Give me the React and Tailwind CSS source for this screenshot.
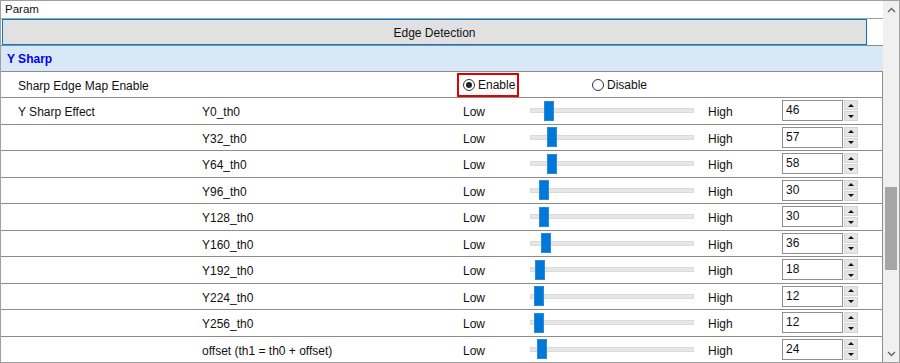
import React from 'react';

const ROWS = [
  { name: 'Y0_th0', value: 46 },
  { name: 'Y32_th0', value: 57 },
  { name: 'Y64_th0', value: 58 },
  { name: 'Y96_th0', value: 30 },
  { name: 'Y128_th0', value: 30 },
  { name: 'Y160_th0', value: 36 },
  { name: 'Y192_th0', value: 18 },
  { name: 'Y224_th0', value: 12 },
  { name: 'Y256_th0', value: 12 },
  { name: 'offset (th1 = th0 + offset)', value: 24 },
];

function Radio({ checked }) {
  return (
    <span className="w-[12px] h-[12px] rounded-full border border-[#333] bg-white flex items-center justify-center flex-shrink-0">
      {checked && <span className="w-[6px] h-[6px] rounded-full bg-[#222]" />}
    </span>
  );
}

function Slider({ value }) {
  const left = (value / 511) * 154;
  return (
    <div className="relative w-[164px] h-[20px] flex items-center">
      <div className="w-full h-[5px] bg-[#e7e7e7] border border-[#dadada]" />
      <div className="absolute top-0 h-[20px] w-[10px] bg-[#0078d7] border border-[#2a8ae0]" style={{ left }} />
    </div>
  );
}

function Spin() {
  return (
    <div className="flex flex-col gap-[1px] ml-[1px]">
      <div className="w-[14px] h-[10px] bg-[#e6e6e6] border border-[#d4d4d4] flex items-center justify-center">
        <svg width="6" height="3" viewBox="0 0 6 3"><path d="M0 3 L3 0 L6 3 Z" fill="#111" /></svg>
      </div>
      <div className="w-[14px] h-[10px] bg-[#e6e6e6] border border-[#d4d4d4] flex items-center justify-center">
        <svg width="6" height="3" viewBox="0 0 6 3"><path d="M0 0 L3 3 L6 0 Z" fill="#111" /></svg>
      </div>
    </div>
  );
}

function ParamRow({ label, name, value }) {
  return (
    <div className="h-[26.5px] flex-shrink-0 flex items-center border-b border-r border-[#8c8c8c] pl-[17px]">
      <div className="w-[184px] pt-[3px]">{label}</div>
      <div className="w-[261px] pt-[3px]">{name}</div>
      <div className="w-[67px] pt-[3px]">Low</div>
      <Slider value={value} />
      <div className="w-[88px] pl-[14px] pt-[3px]">High</div>
      <div className="w-[61px] h-[21px] border border-[#8f8f8f] bg-white pl-[3px] leading-[18px]">{value}</div>
      <Spin />
    </div>
  );
}

export default function App() {
  return (
    <div className="w-[900px] h-[363px] border border-[#a0a0a0] bg-white flex overflow-hidden text-[12px] text-[#111] font-['Liberation_Sans',Arial,sans-serif]">
      <div className="w-[882px] flex flex-col">
        {/* Param header */}
        <div className="h-[18px] flex-shrink-0 border-b border-[#a0a0a0] pl-[4px] text-[11.5px] leading-[17px]">Param</div>

        {/* Group button */}
        <div className="h-[27px] flex-shrink-0 border-b border-[#8c8c8c] pl-[1px]">
          <div className="w-[865px] h-[26px] bg-[#e1e1e1] border border-[#0078d7] flex items-center justify-center pt-[1px]">
            Edge Detection
          </div>
        </div>

        {/* Section header */}
        <div className="h-[26px] flex-shrink-0 bg-[#d9e8f6] border-b border-[#8c8c8c] pl-[6px] flex items-center font-bold text-[#0000f0]">
          Y Sharp
        </div>

        {/* Enable row */}
        <div className="h-[26px] flex-shrink-0 flex items-center border-b border-r border-[#8c8c8c] pl-[17px]">
          <div className="w-[439px] pt-[3px]">Sharp Edge Map Enable</div>
          <div className="w-[62px] h-[24px] border-2 border-[#e00000] flex items-center gap-[3px] pl-[4px]">
            <Radio checked />
            <span className="pt-[1px]">Enable</span>
          </div>
          <div className="ml-[73px] flex items-center gap-[3px]">
            <Radio />
            <span className="pt-[1px]">Disable</span>
          </div>
        </div>

        {ROWS.map((r, i) => (
          <ParamRow key={r.name} label={i === 0 ? 'Y Sharp Effect' : ''} name={r.name} value={r.value} />
        ))}
      </div>

      {/* Scrollbar */}
      <div className="flex-1 bg-[#f0f0f0] flex flex-col">
        <div className="h-[17px] flex items-center justify-center">
          <svg width="9" height="6" viewBox="0 0 9 6"><path d="M1 5 L4.5 1.5 L8 5" stroke="#606060" strokeWidth="1.3" fill="none" /></svg>
        </div>
        <div className="flex-1">
          <div className="mt-[169px] mx-auto w-[12px] h-[83px] bg-[#a6a6a6]" />
        </div>
        <div className="h-[17px] flex items-center justify-center">
          <svg width="9" height="6" viewBox="0 0 9 6"><path d="M1 1 L4.5 4.5 L8 1" stroke="#606060" strokeWidth="1.3" fill="none" /></svg>
        </div>
      </div>
    </div>
  );
}
